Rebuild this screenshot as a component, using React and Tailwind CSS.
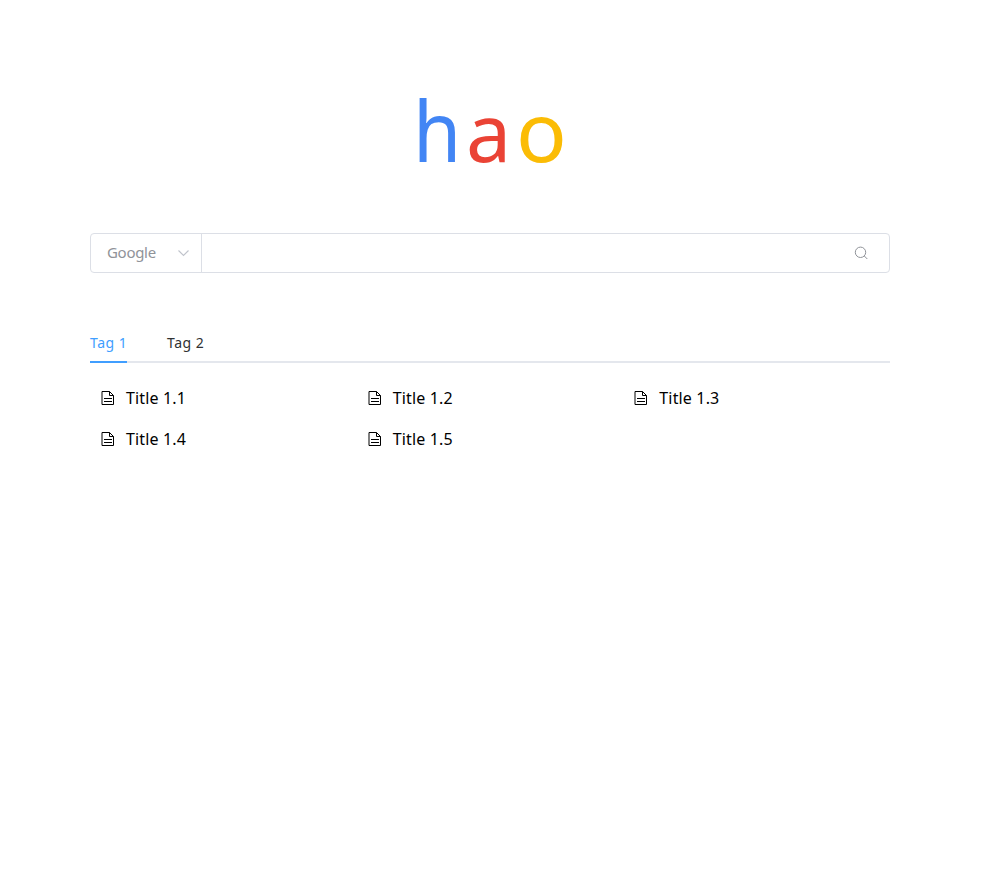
function DocIcon() {
  return (
    <svg className="h-4 w-4 shrink-0" viewBox="0 0 16 16" fill="none" stroke="currentColor" strokeWidth="1">
      <path d="M2 1.5h7.5l4 4v9H2z" />
      <path d="M9.5 1.5v4h4" />
      <path d="M4 8.5h8M4 11.5h8" />
    </svg>
  );
}

const links = ["Title 1.1", "Title 1.2", "Title 1.3", "Title 1.4", "Title 1.5"];

export default function App() {
  return (
    <div className="min-h-[887px] bg-white font-['Noto_Sans',sans-serif]">
      <main className="mx-auto flex w-[802px] flex-col pt-[70px] pr-0.5 text-black">
        <h1 className="flex h-[120px] items-center justify-center pl-px text-[84px] leading-[120px]">
          <span className="w-[53px] origin-left scale-x-[0.93] text-[#4285f4]">h</span>
          <span className="w-[50px] origin-[0_77%] scale-x-[0.96] scale-y-[0.96] text-[#ea4335]">a</span>
          <span className="w-[52px] origin-[0_77%] scale-x-100 scale-y-[0.97] text-[#fbbc05]">o</span>
        </h1>
        <div className="mt-[43px] flex h-10 rounded-[4px] border border-[#dcdfe6]">
          <div className="flex w-[111px] items-center justify-between border-r border-[#dcdfe6] pr-[11px] pl-4">
            <span className="pb-0.5 text-[15px] leading-5 tracking-[-0.3px] text-[#909399]">Google</span>
            <svg className="h-3.5 w-3.5" viewBox="0 0 14 14" fill="none" stroke="#c0c4cc" strokeWidth="1.1">
              <path d="M2.5 4.5l5 5 5-5" />
            </svg>
          </div>
          <div className="flex flex-1 items-center justify-end pr-5">
            <svg className="h-4 w-4" viewBox="0 0 16 16" fill="none" stroke="#909399" strokeWidth="1">
              <circle cx="7.5" cy="7.3" r="5.2" />
              <path d="M11.3 11l3 3" />
            </svg>
          </div>
        </div>
        <nav className="mt-[50px] flex h-10 gap-10 border-b-2 border-[#e4e7ed] text-[14px] leading-10 tracking-[0.5px]">
          <span className="h-10 w-[37px] border-b-2 border-[#409eff] whitespace-nowrap text-[#409eff]">Tag 1</span>
          <span className="whitespace-nowrap text-[#303133]">Tag 2</span>
        </nav>
        <div className="mt-3.5 grid grid-cols-3 text-[16px] tracking-[0.15px]">
          {links.map((title) => (
            <a key={title} className="flex h-[41px] items-center gap-2.5 pl-2.5">
              <DocIcon />
              <span>{title}</span>
            </a>
          ))}
        </div>
      </main>
    </div>
  );
}
